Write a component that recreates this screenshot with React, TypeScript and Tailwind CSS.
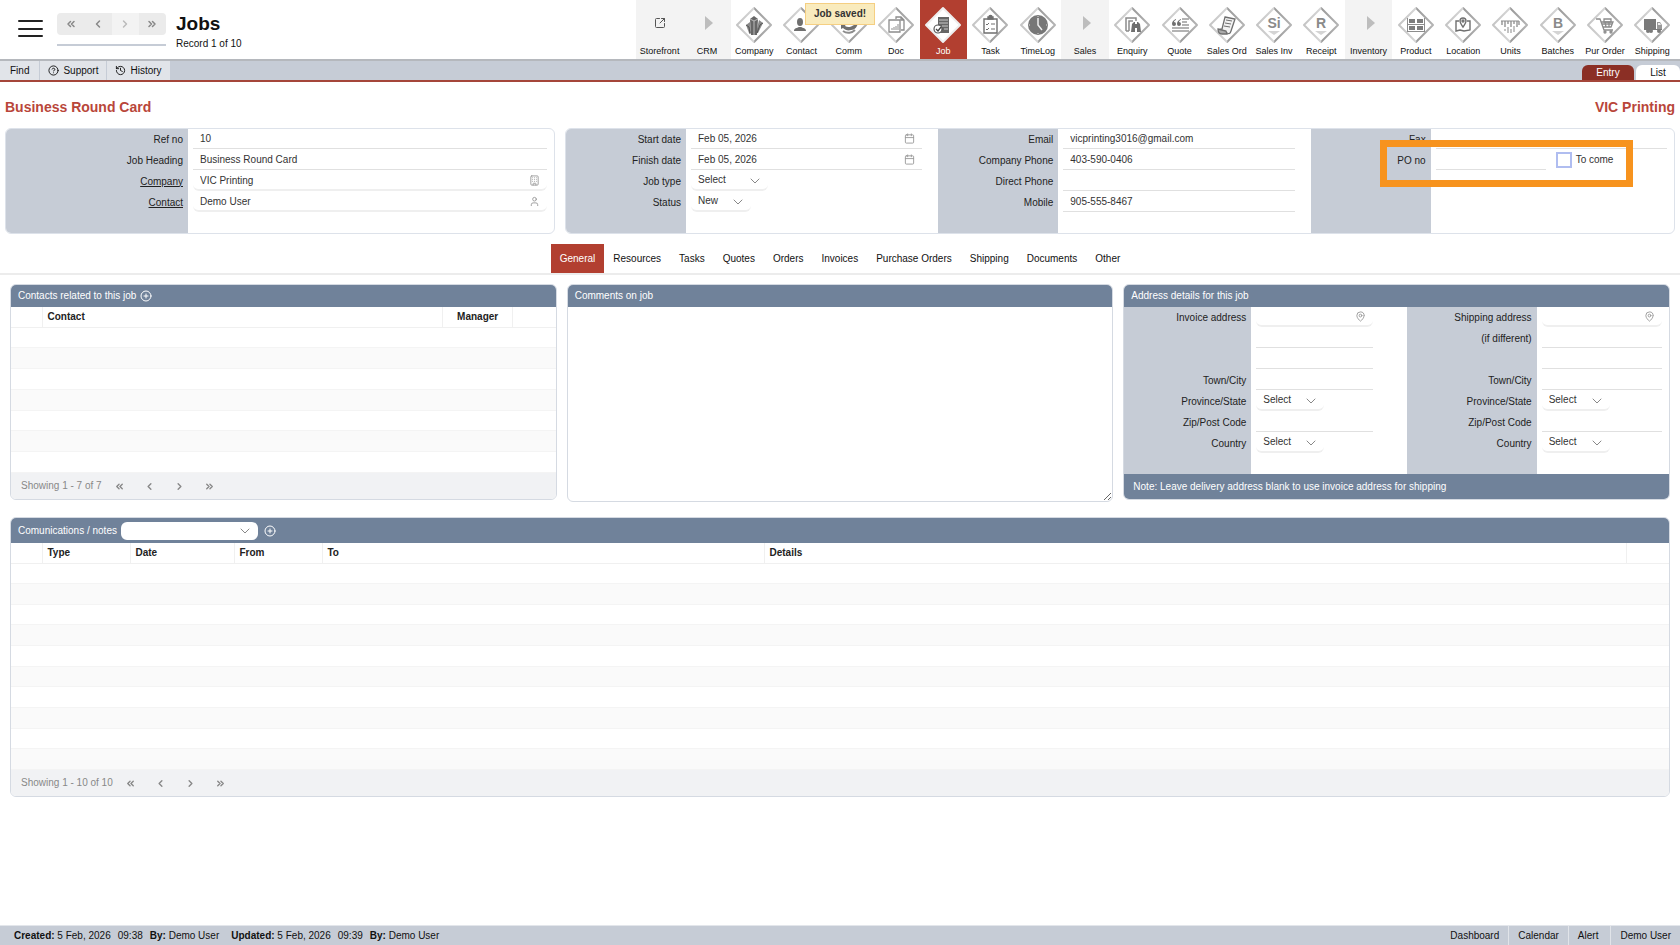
import type { ReactNode } from "react";
import {
  Building,
  Calendar,
  ChevronDown,
  ChevronLeft,
  ChevronRight,
  ChevronsLeft,
  ChevronsRight,
  CircleHelp,
  CirclePlus,
  History,
  MapPin,
  SquareArrowOutUpRight,
  User,
} from "lucide-react";

const DARK = "#6f6f6f";
const MID = "#8c8c8c";

const glyphs: Record<string, ReactNode> = {
  Company: (
    <g>
      <path d="M15 28L12 20l4-3 1 11zM24 28l5-10-4-3-3 13z" fill="#8a8a8a" />
      <path d="M17 30l-1-16 4-3 4 3-1 16z" fill="#666" />
      <path d="M16 14l4 2 4-2M20 16v14" stroke="#bbb" fill="none" />
      <path d="M12 20l3 2 1 7M29 18l-3 2-3 8" stroke="#555" fill="none" />
    </g>
  ),
  Contact: (
    <g fill={DARK}>
      <ellipse cx="19" cy="17" rx="3" ry="4" />
      <path d="M13 26c0-3 3-3 5-4h2c2 1 5 1 5 4z" />
      <circle cx="26" cy="17" r="1" fill="#aaa" />
    </g>
  ),
  Comm: (
    <g fill={DARK}>
      <path d="M12 20l5-1-1 2c3 2 6 1 9-1l4-2c-1 4-3 7-7 7-3 1-6 0-8-2l-2 1z" />
      <path d="M14 26c4 3 9 2 12-1" stroke={MID} strokeWidth="2" fill="none" />
    </g>
  ),
  Doc: (
    <g fill="none" stroke={MID} strokeWidth="1.3">
      <path d="M13 15h11v12H13z" />
      <path d="M20 14v-2h5l3 3v10h-3M25 12v3h3" />
      <path d="M16 25v-2M18 25v-3M20 25v-4M22 25v-6" strokeWidth="1" />
    </g>
  ),
  Job: (
    <g>
      <path d="M15 12h11v16H15z" fill="#666" />
      <path d="M16 15h9M16 18h9M19 21h6M21 24h4" stroke="#c9c9c9" />
      <circle cx="15" cy="24" r="4" fill="#fff" stroke="#555" strokeWidth="1.2" />
      <path d="M13 24l2 2 3-4" stroke="#444" strokeWidth="1.3" fill="none" />
    </g>
  ),
  Task: (
    <g fill="none" stroke={DARK} strokeWidth="1.4">
      <path d="M14 14h13v14H14z" />
      <path d="M18 14v-2h1c0-2 3-2 3 0h1v2z" fill={DARK} />
      <path d="M16 19l1 1 2-2M16 24l1 1 2-2M21 19h4M21 24h4" strokeWidth="1" />
    </g>
  ),
  TimeLog: (
    <g>
      <circle cx="20" cy="20" r="10" fill="#777" />
      <path d="M20 13v7l4 5" stroke="#eee" strokeWidth="1.5" fill="none" />
      <path d="M20 11v1M20 28v1M11 20h1M28 20h1" stroke="#ddd" />
    </g>
  ),
  Enquiry: (
    <g>
      <path d="M14 26V13h10v3M14 26h3M17 26V16h4" fill="none" stroke={MID} strokeWidth="1.5" />
      <path d="M19 27l1-8 2-2h1v10zM25 27V17h1l2 2 1 8zM23 19h2v4h-2z" fill={DARK} />
    </g>
  ),
  Quote: (
    <g>
      <path
        d="M16 14c-3 1-4 3-4 5a2 2 0 1 0 2-2c0-1 1-2 2-2zM21 14c-3 1-4 3-4 5a2 2 0 1 0 2-2c0-1 1-2 2-2z"
        fill={DARK}
      />
      <path d="M22 14h7M22 17h5M22 20h7M12 23h17M12 26h17" stroke="#9a9a9a" strokeWidth="1.3" />
    </g>
  ),
  "Sales Ord": (
    <g fill="none" stroke={DARK} strokeWidth="1.3">
      <path d="M18 12l10 2-4 12c-1 3-2 3-4 2l-8-2c0-2 1-2 3-2z" fill="#f2f2f2" />
      <path d="M11 24l8 2 1 3h-5c-3 0-4-2-4-5z" fill="#aaa" />
      <path d="M19 15l6 1M18 18l6 1M17 21l6 1" strokeWidth="1" />
    </g>
  ),
  Product: (
    <g fill={MID}>
      <path d="M11 13h1v14h-1zM28 13h1v14h-1zM12 19h16v1H12zM12 26h16v1H12z" />
      <path d="M13 14h6v4h-6zM21 14h6v4h-6zM13 21h6v4h-6zM21 21h6v4h-6z" fill="#7c7c7c" />
    </g>
  ),
  Location: (
    <g fill="none" stroke={DARK} strokeWidth="1.4">
      <path d="M16 16h-3v10l4-1 4 1 6-1V16h-3" />
      <path d="M20 22c-2-3-3-4-3-6a3 3 0 0 1 6 0c0 2-1 3-3 6z" fill="#fff" />
      <circle cx="20" cy="16" r="1" />
    </g>
  ),
  Units: (
    <g stroke={MID} strokeWidth="1.3">
      <path d="M12 16v4M15 16v6M18 16v3M21 16v6M24 16v3M27 16v6M29 16v4" />
      <path d="M15 24v2M18 22v6M21 24v4M24 21v6" stroke="#a5a5a5" />
      <path d="M11 16h18" strokeWidth="1" />
    </g>
  ),
  "Pur Order": (
    <g fill="none" stroke={MID} strokeWidth="1.3">
      <path d="M11 14h4l4 11h9M16 17h12l-2 5h-8M17 19h10M20 17l1 5M24 17v5" />
      <path d="M19 14h7v3h-7z" />
      <circle cx="20" cy="27" r="1" />
      <circle cx="26" cy="27" r="1" />
    </g>
  ),
  Shipping: (
    <g fill="#7a7a7a">
      <path d="M12 14h12v10H12z" />
      <path d="M25 17h3l2 3v4h-5z" fill="#999" />
      <path d="M26 18h2l1 2h-3z" fill="#eee" />
      <path d="M12 24h18v1H12z" />
      <circle cx="16" cy="26" r="2" />
      <circle cx="19" cy="26" r="2" />
      <circle cx="27" cy="26" r="2" />
    </g>
  ),
};

const letters: Record<string, string> = { "Sales Inv": "Si", Receipt: "R", Batches: "B" };

const modules = [
  "Storefront", "CRM", "Company", "Contact", "Comm", "Doc", "Job", "Task",
  "TimeLog", "Sales", "Enquiry", "Quote", "Sales Ord", "Sales Inv", "Receipt",
  "Inventory", "Product", "Location", "Units", "Batches", "Pur Order", "Shipping",
];

const groups = ["CRM", "Sales", "Inventory"];

function ModuleIcon({ name }: { name: string }) {
  if (name === "Storefront") {
    return <SquareArrowOutUpRight className="size-3 text-[#555]" />;
  }
  if (groups.includes(name)) {
    return (
      <svg viewBox="0 0 8 14" className="ml-1 h-3.5 w-2">
        <path d="M0 0l8 7-8 7z" fill="#bdbdbd" />
      </svg>
    );
  }
  return (
    <svg viewBox="0 0 40 40" className="size-10">
      <defs>
        <linearGradient id="edge" x1="0" y1="0" x2="1" y2="0">
          <stop offset="0" stopColor="#c4c4c4" />
          <stop offset="0.5" stopColor="#d6d6d6" />
          <stop offset="0.52" stopColor="#9a9a9a" />
          <stop offset="1" stopColor="#b4b4b4" />
        </linearGradient>
      </defs>
      <path
        d="M20 3L37 20L20 37L3 20z"
        fill="#fff"
        stroke={name === "Job" ? "#eeeeee" : "url(#edge)"}
        strokeWidth="2"
        strokeLinejoin="round"
      />
      {letters[name] ? (
        <g>
          <text x="20" y="23" textAnchor="middle" fontSize="14" fontWeight="700" fill="#8a8a8a">
            {letters[name]}
          </text>
          <path d="M14 26h12l-6 4z" fill="#d4d4d4" />
        </g>
      ) : (
        glyphs[name]
      )}
    </svg>
  );
}

function ModuleLink({ name }: { name: string }) {
  const grey = name === "Storefront" || groups.includes(name);
  const active = name === "Job";
  return (
    <a
      href="#"
      className={`flex min-w-0 flex-1 flex-col items-center ${
        active ? "bg-[#b23f30] text-white" : grey ? "bg-[#f3f3f3]" : ""
      }`}>
      <span className={`flex h-[45px] items-center ${grey ? "" : "pt-[5px]"}`}>
        <ModuleIcon name={name} />
      </span>
      <span className="text-[9px] leading-3 whitespace-nowrap">{name}</span>
    </a>
  );
}

function Header() {
  const pager = "flex h-[22px] flex-1 items-center justify-center";
  return (
    <header className="flex h-[61px] border-b-2 border-[#b5b8bd]">
      <div className="flex w-[636px] shrink-0 pl-[18px]">
        <button aria-label="Menu" className="mt-5 flex h-[17px] w-[25px] flex-col justify-between">
          <span className="h-[2px] w-full rounded bg-[#222]" />
          <span className="h-[2px] w-full rounded bg-[#222]" />
          <span className="h-[2px] w-full rounded bg-[#222]" />
        </button>
        <div className="mt-[13px] ml-[14px] w-[109px]">
          <div className="flex overflow-hidden rounded bg-[#ebebeb] text-[#888]">
            <button aria-label="First record" className={pager}>
              <ChevronsLeft className="size-3" strokeWidth={3} />
            </button>
            <button aria-label="Previous record" className={pager}>
              <ChevronLeft className="size-3" strokeWidth={3} />
            </button>
            <button aria-label="Next record" className={`${pager} bg-[#f3f3f3] text-[#bbb]`}>
              <ChevronRight className="size-3" strokeWidth={3} />
            </button>
            <button aria-label="Last record" className={pager}>
              <ChevronsRight className="size-3" strokeWidth={3} />
            </button>
          </div>
          <div className="mt-[9px] h-[2px] bg-[#c6ccd6]" />
        </div>
        <div className="mt-3 ml-2.5">
          <h1 className="text-[19px] leading-6 font-bold">Jobs</h1>
          <p className="mt-0.5 leading-3">Record 1 of 10</p>
        </div>
      </div>
      <nav className="flex flex-1 pr-1">
        {modules.map((name) => (
          <ModuleLink key={name} name={name} />
        ))}
      </nav>
    </header>
  );
}

function SubBar() {
  const item = "flex items-center gap-1 bg-[#e1e4e9]";
  return (
    <div className="flex h-[21px] border-b-2 border-[#a5463a] bg-[#c6ccd6]">
      <div className="flex gap-px">
        <button className={`${item} px-2.5`}>Find</button>
        <button className={`${item} px-2`}><CircleHelp className="size-[11px]" />Support</button>
        <button className={`${item} px-2`}><History className="size-[11px]" />History</button>
      </div>
      <div className="ml-auto flex items-end gap-[2px]">
        <a href="#" className="flex h-[15px] w-[52px] items-center justify-center rounded-t-md bg-[#8b2f25] text-white">
          Entry
        </a>
        <a href="#" className="flex h-[15px] w-[44px] items-center justify-center rounded-t-md bg-white">
          List
        </a>
      </div>
    </div>
  );
}

type Field = {
  label: string;
  id?: string;
  value?: string;
  kind?: "select" | "rounded" | "po";
  link?: boolean;
  icon?: ReactNode;
  width?: string;
};

function Select({ field }: { field: Field }) {
  return (
    <div className={`relative ${field.width}`}>
      <select
        id={field.id}
        className="h-5 w-full appearance-none rounded-md border-b-2 border-[#efefef] bg-white pl-[7px]">
        <option>{field.value}</option>
      </select>
      <ChevronDown
        className="pointer-events-none absolute top-0.5 right-[5px] size-4 text-[#888]"
        strokeWidth={1.5}
      />
    </div>
  );
}

function TextField({ field }: { field: Field }) {
  return (
    <div className="relative">
      <input
        id={field.id}
        aria-label={field.link || !field.label ? field.label || "Address line" : undefined}
        defaultValue={field.value}
        className={`h-5 w-full pl-[7px] outline-none ${
          field.kind === "rounded" ? "rounded-md border-b-2 border-[#efefef]" : "border-b border-[#e0e0e0]"
        }`}
      />
      {field.icon && <span className="absolute top-1 right-[7px] text-[#999]">{field.icon}</span>}
    </div>
  );
}

function Fields({ fields, cols, pad }: { fields: Field[]; cols: string; pad: string }) {
  return (
    <div className={`grid content-start ${cols}`}>
      {fields.map((field, i) => (
        <div key={i} className="contents">
          <div className="flex h-[21px] items-center justify-end bg-[#c6ccd6] pr-[5px] text-[#222]">
            {field.link ? (
              <a href="#" className="underline">{field.label}</a>
            ) : (
              <label htmlFor={field.id}>{field.label}</label>
            )}
          </div>
          <div className={`h-[21px] pl-[5px] text-[#333] ${pad}`}>
            {field.kind === "select" && <Select field={field} />}
            {field.kind === "po" && (
              <div className="flex">
                <input id={field.id} className="h-5 w-[110px] border-b border-[#e0e0e0] pl-[7px] outline-none" />
                <label className="ml-2.5 flex items-center gap-1">
                  <input
                    type="checkbox"
                    className="size-4 appearance-none border-2 border-[#b0bdf0] bg-white"
                  />
                  To come
                </label>
              </div>
            )}
            {(!field.kind || field.kind === "rounded") && <TextField field={field} />}
          </div>
        </div>
      ))}
      <div className="h-5 bg-[#c6ccd6]" />
    </div>
  );
}

const small = "size-[11px]";

const jobFields: Field[] = [
  { label: "Ref no", id: "ref", value: "10" },
  { label: "Job Heading", id: "heading", value: "Business Round Card" },
  { label: "Company", link: true, kind: "rounded", value: "VIC Printing", icon: <Building className={small} /> },
  { label: "Contact", link: true, kind: "rounded", value: "Demo User", icon: <User className={small} /> },
];

const dateFields: Field[] = [
  { label: "Start date", id: "start", value: "Feb 05, 2026", icon: <Calendar className={small} /> },
  { label: "Finish date", id: "finish", value: "Feb 05, 2026", icon: <Calendar className={small} /> },
  { label: "Job type", id: "type", kind: "select", value: "Select", width: "w-[77px]" },
  { label: "Status", id: "status", kind: "select", value: "New", width: "w-[60px]" },
];

const phoneFields: Field[] = [
  { label: "Email", id: "email", value: "vicprinting3016@gmail.com" },
  { label: "Company Phone", id: "cphone", value: "403-590-0406" },
  { label: "Direct Phone", id: "dphone" },
  { label: "Mobile", id: "mobile", value: "905-555-8467" },
];

const pinField = { kind: "rounded" as const, icon: <MapPin className={small} /> };

const invoiceFields: Field[] = [
  { label: "Invoice address", id: "inv1", ...pinField },
  { label: "" },
  { label: "" },
  { label: "Town/City", id: "inv-city" },
  { label: "Province/State", id: "inv-prov", kind: "select", value: "Select", width: "w-[68px]" },
  { label: "Zip/Post Code", id: "inv-zip" },
  { label: "Country", id: "inv-country", kind: "select", value: "Select", width: "w-[68px]" },
];

const shippingFields: Field[] = [
  { label: "Shipping address", id: "ship1", ...pinField },
  { label: "(if different)", id: "ship2" },
  { label: "" },
  { label: "Town/City", id: "ship-city" },
  { label: "Province/State", id: "ship-prov", kind: "select", value: "Select", width: "w-[68px]" },
  { label: "Zip/Post Code", id: "ship-zip" },
  { label: "Country", id: "ship-country", kind: "select", value: "Select", width: "w-[68px]" },
];

function Summary() {
  const box = "overflow-hidden rounded-md border border-[#dde2ea]";
  return (
    <div className="relative grid grid-cols-[550fr_1110fr] gap-2.5 px-[5px]">
      <div className={box}>
        <Fields fields={jobFields} cols="grid-cols-[182px_1fr]" pad="pr-[7px]" />
      </div>
      <div className={`${box} grid grid-cols-[373fr_373fr_364fr]`}>
        <Fields fields={dateFields} cols="grid-cols-[120px_1fr]" pad="pr-4" />
        <Fields fields={phoneFields} cols="grid-cols-[120px_1fr]" pad="pr-4" />
        <div className="flex flex-col">
          <Fields
            fields={[
              { label: "Fax", id: "fax" },
              { label: "PO no", id: "po", kind: "po" },
            ]}
            cols="grid-cols-[120px_1fr]"
            pad="pr-[7px]"
          />
          <div className="w-[120px] flex-1 bg-[#c6ccd6]" />
        </div>
      </div>
      {/* highlight frame around the PO number */}
      <div className="pointer-events-none absolute top-3 right-[47px] h-[47px] w-[253px] border-[7px] border-[#f7931e]" />
    </div>
  );
}

const tabs = [
  "General", "Resources", "Tasks", "Quotes", "Orders", "Invoices",
  "Purchase Orders", "Shipping", "Documents", "Other",
];

function Tabs() {
  return (
    <nav className="mt-2.5 flex justify-center border-b-2 border-[#ececec]">
      {tabs.map((tab) => (
        <a
          key={tab}
          href="#"
          className={`flex h-[29px] items-center px-[9px] ${tab === "General" ? "bg-[#b23f30] text-white" : ""}`}>
          {tab}
        </a>
      ))}
    </nav>
  );
}

const cardClass = "overflow-hidden rounded-md border border-[#d5dae2]";

function CardTitle({ children }: { children: ReactNode }) {
  return (
    <div className="flex h-[22px] items-center gap-1 bg-[#70829a] px-[7px] text-white">{children}</div>
  );
}

function Pager({ text }: { text: string }) {
  return (
    <div className="flex h-[26px] items-center bg-[#f1f2f4] pl-2.5 text-[#888]">
      <span className="mr-3">{text}</span>
      <div className="flex gap-[19px]">
        <button aria-label="First page"><ChevronsLeft className={small} strokeWidth={3} /></button>
        <button aria-label="Previous page"><ChevronLeft className={small} strokeWidth={3} /></button>
        <button aria-label="Next page"><ChevronRight className={small} strokeWidth={3} /></button>
        <button aria-label="Last page"><ChevronsRight className={small} strokeWidth={3} /></button>
      </div>
    </div>
  );
}

type Column = { name: string; width: string; center?: boolean };

function Grid({ columns, rows, height }: { columns: Column[]; rows: number; height: string }) {
  return (
    <table className={`w-full table-fixed ${height}`}>
      <thead>
        <tr>
          {columns.map((col, i) => (
            <th
              key={i}
              className={`h-5 border-b border-[#f0f0f0] p-0 pl-[5px] font-bold text-[#222] not-last:border-r ${col.width} ${
                col.center ? "pr-[5px] text-center" : "text-left"
              }`}>
              {col.name}
            </th>
          ))}
        </tr>
      </thead>
      <tbody>
        {Array.from({ length: rows }, (_, i) => (
          <tr key={i} className="even:bg-[#fafafa]">
            <td colSpan={columns.length} className="border-b border-[#f4f4f4] p-0" />
          </tr>
        ))}
      </tbody>
    </table>
  );
}

const contactColumns: Column[] = [
  { name: "", width: "w-[31px]" },
  { name: "Contact", width: "" },
  { name: "Manager", width: "w-[70px]", center: true },
  { name: "", width: "w-[43px]" },
];

const noteColumns: Column[] = [
  { name: "", width: "w-[31px]" },
  { name: "Type", width: "w-[88px]" },
  { name: "Date", width: "w-[104px]" },
  { name: "From", width: "w-[88px]" },
  { name: "To", width: "w-[442px]" },
  { name: "Details", width: "" },
  { name: "", width: "w-[43px]" },
];

function Footer() {
  const link = "flex items-center border-l border-[#e1e4e9] px-[9px] pt-px first:border-l-0";
  return (
    <footer className="mt-auto flex h-5 items-center border-t border-[#e3e6eb] bg-[#c6ccd6] pl-3.5">
      <p className="flex pt-px">
        <span><b>Created:</b> 5 Feb, 2026</span>
        <span className="ml-[7px]">09:38</span>
        <span className="ml-[7px]"><b>By:</b> Demo User</span>
        <span className="ml-3"><b>Updated:</b> 5 Feb, 2026</span>
        <span className="ml-[7px]">09:39</span>
        <span className="ml-[7px]"><b>By:</b> Demo User</span>
      </p>
      <nav className="ml-auto flex h-full">
        <a href="#" className={link}>Dashboard</a>
        <a href="#" className={link}>Calendar</a>
        <a href="#" className={`${link} pr-3`}>Alert</a>
        <a href="#" className={link}>Demo User</a>
      </nav>
    </footer>
  );
}

export default function App() {
  return (
    <div className="relative flex min-h-screen flex-col bg-white font-['Liberation_Sans',Arial,sans-serif] text-[10px] leading-3 text-[#111]">
      <Header />
      <SubBar />
      <div
        role="status"
        className="absolute top-[3px] left-[805px] flex h-[22px] w-[70px] items-center justify-center border border-[#f5cf82] bg-[#f9ebbd] font-bold text-[#333]">
        Job saved!
      </div>

      <div className="flex justify-between px-[5px] pt-[15px] pb-[11px] text-sm font-bold text-[#b9463a]">
        <h2>Business Round Card</h2>
        <h2>VIC Printing</h2>
      </div>

      <Summary />
      <Tabs />

      <main className="px-2.5 pt-[9px]">
        <div className="grid grid-cols-3 items-start gap-2.5">
          <section className={cardClass}>
            <CardTitle>
              <h3>Contacts related to this job</h3>
              <button aria-label="Add contact"><CirclePlus className="size-3" /></button>
            </CardTitle>
            <Grid columns={contactColumns} rows={7} height="h-[166px]" />
            <Pager text="Showing 1 - 7 of 7" />
          </section>

          <section className={cardClass}>
            <CardTitle><label htmlFor="comments">Comments on job</label></CardTitle>
            <textarea id="comments" className="block h-[194px] w-full resize-y p-1 outline-none" />
          </section>

          <section className={cardClass}>
            <CardTitle><h3>Address details for this job</h3></CardTitle>
            <div className="grid grid-cols-[283fr_263fr]">
              <Fields fields={invoiceFields} cols="grid-cols-[127px_1fr]" pad="pr-[34px]" />
              <Fields fields={shippingFields} cols="grid-cols-[130px_1fr]" pad="pr-[7px]" />
            </div>
            <p className="flex h-[25px] items-center bg-[#70829a] px-[9px] text-white">
              Note: Leave delivery address blank to use invoice address for shipping
            </p>
          </section>
        </div>

        <section className={`${cardClass} mt-[15px]`}>
          <div className="flex h-[25px] items-center gap-1 bg-[#70829a] px-[7px] text-white">
            <label htmlFor="notes">Comunications / notes</label>
            <div className="relative w-[137px]">
              <select id="notes" className="block h-[18px] w-full appearance-none rounded-md bg-white text-[#333]" />
              <ChevronDown
                className="pointer-events-none absolute top-px right-[5px] size-4 text-[#888]"
                strokeWidth={1.5}
              />
            </div>
            <button aria-label="Add note" className="ml-0.5"><CirclePlus className="size-3" /></button>
          </div>
          <Grid columns={noteColumns} rows={10} height="h-[227px]" />
          <Pager text="Showing 1 - 10 of 10" />
        </section>
      </main>

      <Footer />
    </div>
  );
}
